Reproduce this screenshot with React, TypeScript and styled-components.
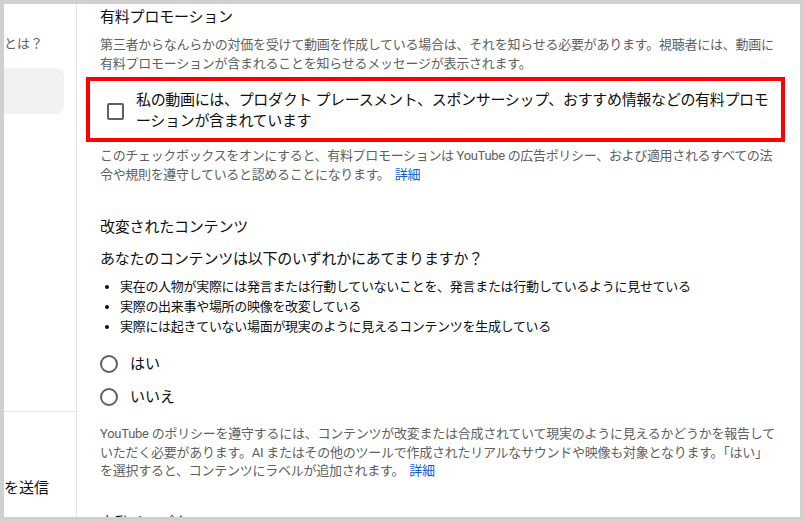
import { createGlobalStyle, styled } from "styled-components";

const GlobalStyle = createGlobalStyle`
  html, body {
    margin: 0;
    padding: 0;
    background: #d0d0d0;
  }
  body {
    font-family: Roboto, "Noto Sans CJK JP", sans-serif;
    color: #0f0f0f;
  }
`;

const bullets = [
  "実在の人物が実際には発言または行動していないことを、発言または行動しているように見せている",
  "実際の出来事や場所の映像を改変している",
  "実際には起きていない場面が現実のように見えるコンテンツを生成している",
];

const App = () => {
  return (
    <>
      <GlobalStyle />
      <Frame>
        <Panel>
          <Sidebar>
            <SideTop>
              <SideHint>とは？</SideHint>
              <SideBox />
            </SideTop>
            <SideBottom>
              <SideLabel>を送信</SideLabel>
            </SideBottom>
          </Sidebar>

          <Main>
            <Heading>有料プロモーション</Heading>
            <Secondary $mt={8}>
              第三者からなんらかの対価を受けて動画を作成している場合は、それを知らせる必要があります。視聴者には、動画に有料プロモーションが含まれることを知らせるメッセージが表示されます。
            </Secondary>

            <Highlight>
              <CheckRow>
                <Checkbox />
                <CheckLabel>
                  私の動画には、プロダクト プレースメント、スポンサーシップ、おすすめ情報などの有料プロモーションが含まれています
                </CheckLabel>
              </CheckRow>
            </Highlight>

            <Secondary $mt={5} $ls={-0.33}>
              このチェックボックスをオンにすると、有料プロモーションは YouTube の広告ポリシー、および適用されるすべての法令や規則を遵守していると認めることになります。
              <Link>詳細</Link>
            </Secondary>

            <Heading $mt={32}>改変されたコンテンツ</Heading>
            <Question>あなたのコンテンツは以下のいずれかにあてまりますか？</Question>

            <BulletList>
              {bullets.map((b) => (
                <li key={b}>{b}</li>
              ))}
            </BulletList>

            <RadioGroup>
              <RadioRow>
                <Radio />
                <RadioText>はい</RadioText>
              </RadioRow>
              <RadioRow>
                <Radio />
                <RadioText>いいえ</RadioText>
              </RadioRow>
            </RadioGroup>

            <Secondary $mt={17}>
              YouTube のポリシーを遵守するには、コンテンツが改変または合成されていて現実のように見えるかどうかを報告していただく必要があります。AI またはその他のツールで作成されたリアルなサウンドや映像も対象となります。「はい」を選択すると、コンテンツにラベルが追加されます。
              <Link>詳細</Link>
            </Secondary>

            <Heading $mt={31}>自動チャプター</Heading>
          </Main>
        </Panel>
      </Frame>
    </>
  );
};

export default App;

const Frame = styled.div`
  width: 804px;
  height: 521px;
  padding: 4px;
  box-sizing: border-box;
`;

const Panel = styled.div`
  width: 796px;
  height: 513px;
  background: #fff;
  display: flex;
  overflow: hidden;
`;

const Sidebar = styled.div`
  width: 72px;
  flex-shrink: 0;
  border-right: 1px solid #e5e5e5;
  display: flex;
  flex-direction: column;
`;

const SideTop = styled.div`
  height: 408px;
  padding-top: 30px;
  box-sizing: border-box;
  border-bottom: 1px solid #e5e5e5;
`;

const SideHint = styled.div`
  font-size: 13px;
  line-height: 20px;
  color: #606060;
  white-space: nowrap;
`;

const SideBox = styled.div`
  margin-top: 14px;
  width: 60px;
  height: 46px;
  background: #f2f2f2;
  border-radius: 0 8px 8px 0;
`;

const SideBottom = styled.div`
  padding-top: 65px;
`;

const SideLabel = styled.div`
  font-size: 15px;
  line-height: 22px;
  color: #0f0f0f;
  white-space: nowrap;
`;

const Main = styled.div`
  flex: 1;
  padding: 2px 22px 0 23px;
  min-width: 0;
`;

const Heading = styled.div<{ $mt?: number }>`
  margin-top: ${({ $mt }) => $mt ?? 0}px;
  font-size: 15px;
  line-height: 22px;
  letter-spacing: -0.2px;
  color: #0f0f0f;
`;

const Secondary = styled.div<{ $mt?: number; $ls?: number }>`
  margin-top: ${({ $mt }) => $mt ?? 0}px;
  font-size: 13px;
  line-height: 18.5px;
  letter-spacing: ${({ $ls }) => $ls ?? -0.25}px;
  color: #606060;
`;

const Link = styled.span`
  color: #065fd4;
  margin-left: 5px;
`;

const Highlight = styled.div`
  margin: 4px -7px 0 -14px;
  border: 4px solid #ff0000;
  padding: 9px 10px 6px 17px;
`;

const CheckRow = styled.div`
  display: flex;
  align-items: center;
`;

const Checkbox = styled.div`
  width: 17px;
  height: 17px;
  box-sizing: border-box;
  border: 2px solid #606060;
  border-radius: 2px;
  flex-shrink: 0;
  margin-right: 12px;
`;

const CheckLabel = styled.div`
  font-size: 15px;
  line-height: 21px;
  letter-spacing: -0.33px;
  color: #0f0f0f;
`;

const Question = styled.div`
  margin-top: 10px;
  font-size: 15px;
  line-height: 22px;
  letter-spacing: -0.23px;
  color: #0f0f0f;
`;

const BulletList = styled.ul`
  margin: 7px 0 0;
  padding-left: 20px;
  font-size: 13px;
  line-height: 20px;
  letter-spacing: -0.3px;
  color: #0f0f0f;
`;

const RadioGroup = styled.div`
  margin-top: 16px;
  display: flex;
  flex-direction: column;
  gap: 11px;
`;

const RadioRow = styled.div`
  display: flex;
  align-items: center;
  height: 22px;
`;

const Radio = styled.div`
  width: 18px;
  height: 18px;
  box-sizing: border-box;
  border: 2px solid #606060;
  border-radius: 50%;
  margin-right: 12px;
`;

const RadioText = styled.span`
  font-size: 15px;
  line-height: 22px;
`;
